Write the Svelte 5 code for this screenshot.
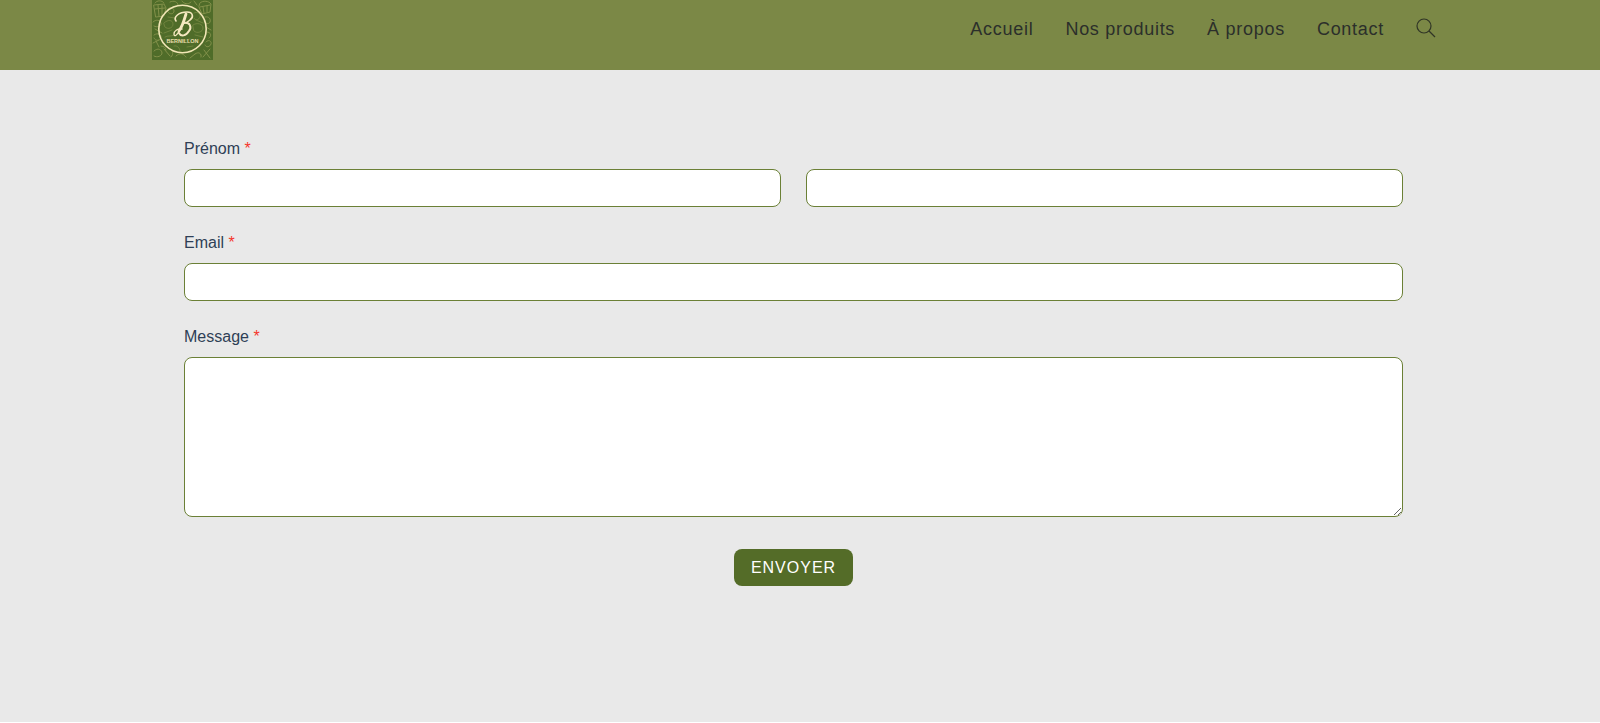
<script>
  const links = ['Accueil', 'Nos produits', 'À propos', 'Contact'];
</script>

<div class="page">
  <header>
    <div class="container bar">
      <a class="logo" href="#home" aria-label="Bernillon">
        <svg viewBox="0 0 61 60" width="61" height="60">
          <rect width="61" height="60" fill="#4f6c29" />
          <g fill="none" stroke="#83914a" stroke-width="1" stroke-linecap="round">
            <path d="M2 5l10-1 2 4-2 8-8 1zM3 9l10-1M6 5l1 11M10 5v11M3 3c2-3 7-3 9 0" />
            <path d="M48 3c3-3 9-2 11 1l-1 8-8 2-3-7zM48 7l10-2M51 7l1 6M55 6v6" />
            <path d="M18 2c4-2 8 0 8 3M30 1c2 3 6 4 9 1M42 1l3 4M16 9c3-3 6-1 6 2s-4 4-6 1z" />
            <path d="M1 22c3-3 7-2 8 1s-4 5-7 3M3 29l7 4M2 35c4-3 8 0 7 3s-6 3-7 0M1 43l6-3M4 41l3 6" />
            <path d="M53 17c4-1 6 2 5 5s-6 1-6-1M54 27l5 3M55 32c4 0 5 4 2 6M54 42c2-3 6-1 5 2s-5 4-6 1" />
            <path d="M2 51c4-4 8-1 8 2s-5 5-8 3M12 49l6 7M18 49c3 1 4 5 1 8M24 56c4-4 8-2 10 1M38 58l5-4M43 54c4-3 7 0 6 3M52 50l6 8M58 49l-7 8M9 46c3 0 5 2 5 4" />
            <path d="M12 23c4-4 9-3 9 1s-5 6-8 3zM12 33l8-3M13 37c3-2 6 0 9-2M42 13c3-2 7 1 6 4s-5 4-6 1M41 25c4-3 10-1 10 3s-6 6-9 3zM43 35l8 2M44 20l7 3M22 46c3-1 6 2 6 5M35 47l6-1M16 17l7 1M30 41l8-2" stroke-opacity=".65" />
          </g>
          <circle cx="30.500" cy="29" r="23.700" fill="none" stroke="#f1e6b6" stroke-width="1.600" />
          <g fill="none" stroke="#f6e8c0" stroke-linecap="round" stroke-linejoin="round">
            <path d="M34 14c-2 7-4 13-7 17" stroke-width="2.800" />
            <path d="M27 31c-2 5-5 6-5 3 0-3 4-6 8-5" stroke-width="1.300" />
            <path d="M24 21c-3-4 3-9 11-9 6 0 7 5 3 8-2 2-4 3-6 3" stroke-width="1.600" />
            <path d="M32 23c6-1 8 4 5 8-3 5-8 6-10 2" stroke-width="2" />
          </g>
          <text x="30.500" y="43" text-anchor="middle" fill="#e8dda9" font-size="5.500" font-weight="700">BERNILLON</text>
        </svg>
      </a>
      <nav>
        {#each links as link}
          <a href="#{link}">{link}</a>
        {/each}
        <button class="search" type="button" aria-label="Rechercher">
          <svg viewBox="0 0 20 20" width="20" height="20" fill="none" stroke="#303526" stroke-width="1.200">
            <circle cx="8" cy="8" r="7" />
            <path d="M13 13l6 6" />
          </svg>
        </button>
      </nav>
    </div>
  </header>

  <main>
    <form class="container">
      <div class="field">
        <label for="first">Prénom <span>*</span></label>
        <div class="names">
          <input id="first" type="text" required />
          <input type="text" aria-label="Nom" required />
        </div>
      </div>
      <div class="field">
        <label for="email">Email <span>*</span></label>
        <input id="email" type="email" required />
      </div>
      <div class="field">
        <label for="message">Message <span>*</span></label>
        <textarea id="message" required></textarea>
      </div>
      <button class="send" type="submit">ENVOYER</button>
    </form>
  </main>
</div>

<style>
  :global(body) {
    margin: 0;
    background: #fff;
  }
  .page, input, textarea, button {
    font-family: "Liberation Sans", Arial, sans-serif;
    font-size: 16px;
    box-sizing: border-box;
  }
  header {
    background: #7b8846;
    padding-right: 12px;
  }
  .container {
    box-sizing: border-box;
    max-width: 1284px;
    margin: 0 auto;
  }
  .bar {
    display: flex;
    justify-content: space-between;
    align-items: flex-start;
    min-height: 70px;
  }
  .logo svg {
    display: block;
  }
  nav {
    display: flex;
    align-items: center;
    gap: 32px;
    padding-top: 16px;
  }
  nav a {
    color: #2b2f2b;
    font-size: 18px;
    line-height: 26px;
    letter-spacing: 0.04em;
    text-decoration: none;
  }
  .search {
    border: 0;
    padding: 0 0 2px;
    background: none;
    cursor: pointer;
  }
  .search svg {
    display: block;
  }
  main {
    background: #e9e9e9;
    padding: 68px 12px 136px 0;
  }
  form {
    display: flex;
    flex-direction: column;
    gap: 25px;
    padding: 0 33px 0 32px;
  }
  .field {
    display: flex;
    flex-direction: column;
    gap: 9px;
  }
  label {
    color: #2f3f56;
    line-height: 22px;
  }
  label span {
    color: #f5352b;
  }
  .names {
    display: grid;
    grid-template-columns: 1fr 1fr;
    gap: 25px;
  }
  input, textarea {
    width: 100%;
    height: 38px;
    padding: 8px 12px;
    border: 1px solid #6b8036;
    border-radius: 8px;
    background: #fff;
  }
  textarea {
    display: block;
    height: 160px;
    resize: vertical;
  }
  .send {
    align-self: center;
    margin-top: 7px;
    height: 37px;
    padding: 0 17px;
    border: 0;
    border-radius: 8px;
    background: #546c28;
    color: #fff;
    letter-spacing: 1px;
    cursor: pointer;
  }
</style>
